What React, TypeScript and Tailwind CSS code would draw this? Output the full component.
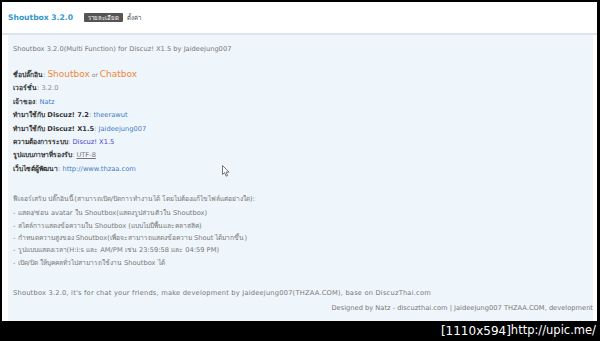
import React from 'react';

const infoRows: { label: string; value: React.ReactNode }[] = [
  { label: 'เวอร์ชั่น', value: <span className="text-[#888]">3.2.0</span> },
  { label: 'เจ้าของ', value: <span className="text-[#3f7cc8]">Natz</span> },
  { label: 'ทำมาใช้กับ Discuz! 7.2', value: <span className="text-[#3f7cc8]">theerawut</span> },
  { label: 'ทำมาใช้กับ Discuz! X1.5', value: <span className="text-[#3f7cc8]">Jaideejung007</span> },
  { label: 'ความต้องการระบบ', value: <span className="text-[#4545c8]">Discuz! X1.5</span> },
  { label: 'รูปแบบภาษาที่รองรับ', value: <span className="text-[#777] underline">UTF-8</span> },
  { label: 'เว็บไซต์ผู้พัฒนา', value: <span className="text-[#3f7cc8]">http://www.thzaa.com</span> },
];

const features = [
  '- แสดง/ซ่อน avatar ใน Shoutbox(แสดงรูปส่วนตัวใน Shoutbox)',
  '- สไตล์การแสดงข้อความใน Shoutbox (แบบไม่มีพื้นและคลาสสิค)',
  '- กำหนดความสูงของ Shoutbox(เพื่อจะสามารถแสดงข้อความ Shout ได้มากขึ้น)',
  '- รูปแบบแสดงเวลา(H:i:s และ AM/PM เช่น 23:59:58 และ 04:59 PM)',
  '- เปิด/ปิด ให้บุคคลทั่วไปสามารถใช้งาน Shoutbox ได้',
];

export default function App() {
  return (
    <div className="w-[600px] h-[341px] bg-black flex flex-col overflow-hidden font-['DejaVu_Sans','Noto_Sans',sans-serif]">
      <div className="mt-[2px] ml-[2px] w-[595px] h-[319px] bg-white flex flex-col">
        {/* Header */}
        <div className="h-[31px] flex items-center px-[6px] gap-[11px] shrink-0">
          <span className="text-[7.6px] font-bold text-[#3497cc]">Shoutbox 3.2.0</span>
          <div className="flex items-center gap-[4px]">
            <span className="bg-[#555] text-white text-[6px] px-[4px] h-[9px] flex items-center rounded-[1px]">รายละเอียด</span>
            <span className="text-[6px] text-[#444]">ตั้งค่า</span>
          </div>
        </div>
        <div className="h-[2px] bg-[#dce5ec] shrink-0" />

        {/* Panel */}
        <div className="relative flex-1 ml-[6px] mr-[4px] bg-[#eff6fb] pl-[5px] pt-[8px] text-[6.7px] text-[#777]">
          <div className="leading-[13px]">Shoutbox 3.2.0(Multi Function) for Discuz! X1.5 by Jaideejung007</div>

          <div className="mt-[12px] leading-[13.4px]">
            <div className="flex items-baseline">
              <span className="font-bold text-[#333]">ชื่อปลั๊กอิน</span>
              <span>:&nbsp;</span>
              <span className="text-[9px] text-[#f0883a]">Shoutbox</span>
              <span className="text-[6px] text-[#888]">&nbsp;or&nbsp;</span>
              <span className="text-[9px] text-[#f0883a]">Chatbox</span>
            </div>
            {infoRows.map((row) => (
              <div key={row.label}>
                <span className="font-bold text-[#333]">{row.label}</span>
                <span>: </span>
                {row.value}
              </div>
            ))}
          </div>

          <div className="mt-[17px] leading-[12.4px]">
            <div className="mb-[1.5px]">ฟีเจอร์เสริม ปลั๊กอินนี้(สามารถเปิด/ปิดการทำงานได้ โดยไม่ต้องแก้ไขไฟล์แต่อย่างใด):</div>
            {features.map((f) => (
              <div key={f}>{f}</div>
            ))}
          </div>

          <div className="mt-[18px] leading-[13px] tracking-[0.2px]">
            Shoutbox 3.2.0, it's for chat your friends, make development by Jaideejung007(THZAA.COM), base on DiscuzThai.com
          </div>
          <div className="mt-[1px] leading-[14px] text-right whitespace-nowrap">
            Designed by Natz - discuzthai.com | Jaideejung007 THZAA.COM, development
          </div>

          {/* mouse cursor */}
          <svg className="absolute left-[214px] top-[130px]" width="8" height="12" viewBox="0 0 8 12">
            <path d="M0.5 0.5 L0.5 9.5 L2.6 7.6 L4.2 11.2 L5.6 10.6 L4.1 7.1 L7 7.1 Z" fill="#fff" stroke="#555" strokeWidth="0.8" />
          </svg>
        </div>
      </div>

      {/* Watermark bar */}
      <div className="flex-1 flex items-center justify-end pr-[4px] text-white leading-none">
        <span className="text-[12px]">[1110x594]</span>
        <span className="text-[11.5px]">http://upic.me/</span>
      </div>
    </div>
  );
}
